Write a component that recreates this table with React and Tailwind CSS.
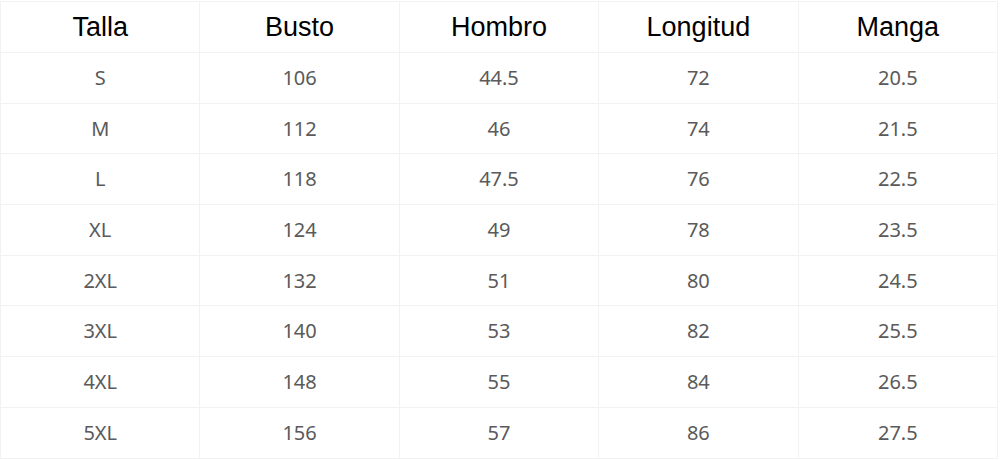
const headers = ['Talla', 'Busto', 'Hombro', 'Longitud', 'Manga']

const rows = [
  ['S', '106', '44.5', '72', '20.5'],
  ['M', '112', '46', '74', '21.5'],
  ['L', '118', '47.5', '76', '22.5'],
  ['XL', '124', '49', '78', '23.5'],
  ['2XL', '132', '51', '80', '24.5'],
  ['3XL', '140', '53', '82', '25.5'],
  ['4XL', '148', '55', '84', '26.5'],
  ['5XL', '156', '57', '86', '27.5'],
]

const App = () => {
  return (
    <div className="w-[1000px] h-[460px] bg-white overflow-hidden pt-px">
      <table className="w-[998px] border-collapse table-fixed">
        <thead>
          <tr className="h-[51px]">
            {headers.map((h) => (
              <th
                key={h}
                className="border border-[#f2f2f2] font-normal text-[27px] text-black text-center align-middle font-['Liberation_Sans',Arial,sans-serif]"
              >
                {h}
              </th>
            ))}
          </tr>
        </thead>
        <tbody>
          {rows.map((row) => (
            <tr key={row[0]} className="h-[50.7px]">
              {row.map((cell, i) => (
                <td
                  key={i}
                  className="border border-[#f2f2f2] text-[20px] text-[#5a5a5a] text-center align-middle font-['Noto_Sans','Open_Sans',sans-serif]"
                >
                  {cell}
                </td>
              ))}
            </tr>
          ))}
        </tbody>
      </table>
    </div>
  )
}

export default App
